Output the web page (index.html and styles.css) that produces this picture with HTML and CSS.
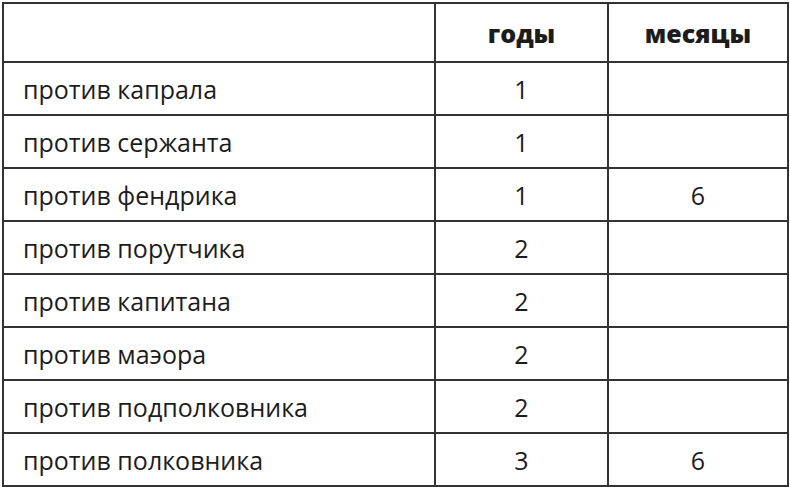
FILE: index.html
```html
<!DOCTYPE html>
<html lang="ru">
<head>
<meta charset="utf-8">
<link rel="stylesheet" href="styles.css">
</head>
<body>
<table class="ranks">
  <colgroup>
    <col class="c-name"><col class="c-years"><col class="c-months">
  </colgroup>
  <thead>
    <tr><th></th><th>годы</th><th>месяцы</th></tr>
  </thead>
  <tbody>
    <tr><td>против капрала</td><td>1</td><td></td></tr>
    <tr><td>против сержанта</td><td>1</td><td></td></tr>
    <tr><td>против фендрика</td><td>1</td><td>6</td></tr>
    <tr><td>против порутчика</td><td>2</td><td></td></tr>
    <tr><td>против капитана</td><td>2</td><td></td></tr>
    <tr><td>против маэора</td><td>2</td><td></td></tr>
    <tr><td>против подполковника</td><td>2</td><td></td></tr>
    <tr><td>против полковника</td><td>3</td><td>6</td></tr>
  </tbody>
</table>
</body>
</html>
```
FILE: styles.css
```css
html, body {
  margin: 0;
  padding: 0;
  background: #fff;
}
body {
  padding: 2px 0 0 2px;
  font-family: "Open Sans", "Noto Sans", sans-serif;
  color: #1c1c1c;
}
.ranks {
  border-collapse: collapse;
  width: 785px;
  table-layout: fixed;
}
.c-name { width: 432px; }
.c-years { width: 173px; }
.c-months { width: 180px; }
.ranks th, .ranks td {
  border: 2px solid #333;
  padding: 0;
  font-size: 25px;
  font-weight: 500;
}
.ranks th {
  height: 57px;
  font-size: 25px;
  font-weight: 800;
  text-align: center;
}
.ranks td {
  height: 51px;
  text-align: center;
}
.ranks td:first-child {
  text-align: left;
  padding-left: 19px;
}
```
